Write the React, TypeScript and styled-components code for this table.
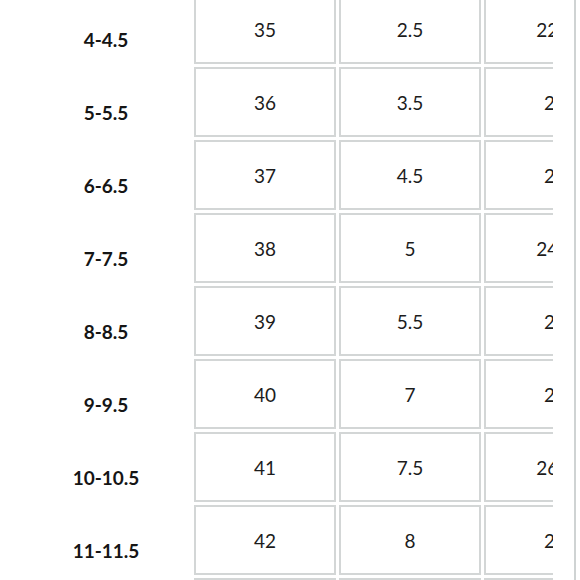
import React from 'react';
import styled, { createGlobalStyle } from 'styled-components';

const GlobalStyle = createGlobalStyle`
  body {
    margin: 0;
    background: #fff;
    overflow: hidden;
    font-family: Lato, "Open Sans", sans-serif;
    color: #1c1c1c;
  }
`;

const Frame = styled.div`
  width: 574px;
  height: 580px;
  border-right: 2px solid #cfd3d3;
  overflow: hidden;
`;

const Viewport = styled.div`
  width: 553px;
  height: 580px;
  overflow: hidden;
`;

// scrolled a few pixels down, so the first row is cut at the top
const Table = styled.div`
  margin-top: -6px;
  display: flex;
  flex-direction: column;
  gap: 3px;
`;

const Row = styled.div`
  display: grid;
  grid-template-columns: 191px repeat(3, 142px);
  column-gap: 3px;
`;

const Label = styled.div`
  display: flex;
  align-items: center;
  justify-content: center;
  padding: 20px 0 0 21px;
  font-size: 19px;
  font-weight: 700;
  color: #151515;
`;

const Cell = styled.div`
  box-sizing: border-box;
  height: 70px;
  border: 2px solid #d3d6d6;
  display: flex;
  align-items: center;
  justify-content: center;
  font-size: 19px;
  font-weight: 400;
  white-space: nowrap;
`;

const rows = [
  ['4-4.5', '35', '2.5', '22.5'],
  ['5-5.5', '36', '3.5', '23'],
  ['6-6.5', '37', '4.5', '24'],
  ['7-7.5', '38', '5', '24.5'],
  ['8-8.5', '39', '5.5', '25'],
  ['9-9.5', '40', '7', '26'],
  ['10-10.5', '41', '7.5', '26.5'],
  ['11-11.5', '42', '8', '27'],
  ['12', '43', '9', '28'],
];

const App: React.FC = () => {
  return (
    <>
      <GlobalStyle />
      <Frame>
        <Viewport>
          <Table>
            {rows.map(([us, eu, uk, cm]) => (
              <Row key={us}>
                <Label>{us}</Label>
                <Cell>{eu}</Cell>
                <Cell>{uk}</Cell>
                <Cell>{cm}</Cell>
              </Row>
            ))}
          </Table>
        </Viewport>
      </Frame>
    </>
  );
};

export default App;
